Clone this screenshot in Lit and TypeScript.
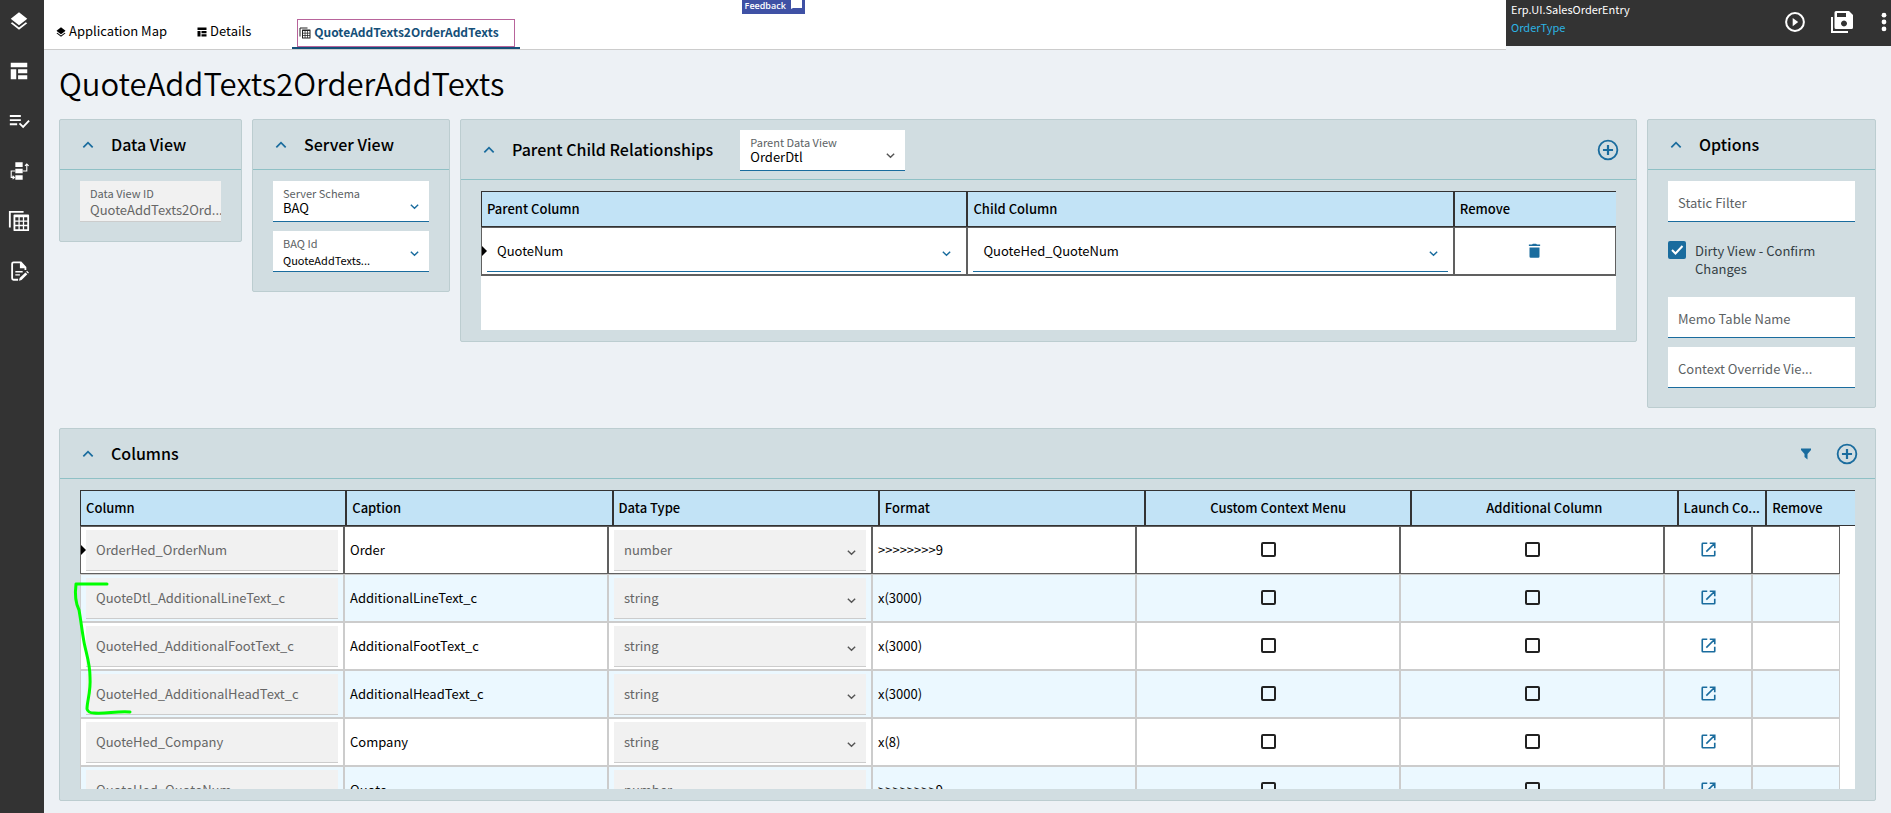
import { LitElement, html, css, svg, nothing } from "lit";
import { customElement, property } from "lit/decorators.js";
import { classMap } from "lit/directives/class-map.js";

const icons = {
  layers: svg`<path d="M12 16.500l7.400-5.700L21 9.500 12 2.500 3 9.500l1.600 1.300z M12 19L4.600 13.300 3 14.500l9 7 9-7-1.600-1.200z"/>`,
  layout: svg`<path d="M3 3h18v5H3z M3 10h6v11H3z M11 10h10v4.500H11z M11 16.500h10V21H11z"/>`,
  listCheck: svg`<path d="M2 5.500h12v2H2z M2 10h12v2H2z M2 14.500h8v2H2z"/><path d="M12.500 14.500l4 4 6.500-7" fill="none" stroke="currentColor" stroke-width="2"/>`,
  flow: svg`<path d="M8 2.500h8v5H8z M8 9.500h8v5H8z M8 16.500h8v5H8z"/><path d="M16 12h4.500V5M18.500 6.500l2-2 2 2M8 12H3.500v7h2.500M5 17.200l2 1.800-2 1.800" fill="none" stroke="currentColor" stroke-width="1.200"/>`,
  grid: svg`<path d="M2 19V2h15" fill="none" stroke="currentColor" stroke-width="2"/><path fill-rule="evenodd" d="M7 5h15a1 1 0 0 1 1 1v16a1 1 0 0 1-1 1H7a1 1 0 0 1-1-1V6a1 1 0 0 1 1-1z M8 8v3.400h3.400V8z M12.800 8v3.400h3.400V8z M17.600 8v3.400H21V8z M8 12.800v3.400h3.400v-3.400z M12.800 12.800v3.400h3.400v-3.400z M17.600 12.800v3.400H21v-3.400z M8 17.600V21h3.400v-3.400z M12.800 17.600V21h3.400v-3.400z M17.600 17.600V21H21v-3.400z"/>`,
  edit: svg`<path d="M11 21.500H6a1.500 1.500 0 0 1-1.500-1.500V4A1.500 1.500 0 0 1 6 2.500h8l5 5.500v3" fill="none" stroke="currentColor" stroke-width="2"/><path d="M13 2v7h6.500z M8 12h8v1.500H8z M8 15.500h5V17H8z M12 22.500l.7-2.800 6.300-6.200 2.100 2.100-6.300 6.200z M19.800 12.700l1-1 2.100 2.100-1 1z"/>`,
  play: svg`<circle cx="12" cy="12" r="9.700" fill="none" stroke="currentColor" stroke-width="2.200"/><path d="M9.500 7.500l6 4.500-6 4.500z"/>`,
  save: svg`<path d="M2 7v15h16" fill="none" stroke="currentColor" stroke-width="2"/><path fill-rule="evenodd" d="M6 1h13l4 4v12.500a1.500 1.500 0 0 1-1.500 1.500H6a1.500 1.500 0 0 1-1.500-1.500v-15A1.500 1.500 0 0 1 6 1z M7 3v4h9V3z M14 10.500a3 3 0 1 0 .01 0z"/>`,
  dots: svg`<circle cx="12" cy="4.500" r="2.600"/><circle cx="12" cy="12" r="2.600"/><circle cx="12" cy="19.500" r="2.600"/>`,
  up: svg`<path d="M4 16l8-8 8 8" fill="none" stroke="currentColor" stroke-width="3"/>`,
  down: svg`<path d="M4 8l8 8 8-8" fill="none" stroke="currentColor" stroke-width="3"/>`,
  add: svg`<circle cx="12" cy="12" r="10.200" fill="none" stroke="currentColor" stroke-width="2"/><path d="M12 6.500v11M6.500 12h11" fill="none" stroke="currentColor" stroke-width="2.400"/>`,
  filter: svg`<path d="M2 1h20v3l-7 8v11l-6-5v-6L2 4z"/>`,
  trash: svg`<path d="M4 7h16v14.500a2 2 0 0 1-2 2H6a2 2 0 0 1-2-2z M3 2.500h5L9.500 1h5L16 2.500h5v2.300H3z"/>`,
  launch: svg`<path d="M10 2H3a1 1 0 0 0-1 1v18a1 1 0 0 0 1 1h18a1 1 0 0 0 1-1v-7M14 2h8v8M22 2L8.500 15.500" fill="none" stroke="currentColor" stroke-width="2.600"/>`,
};

type IconName = keyof typeof icons;

const icon = (name: IconName, size = "m") =>
  html`<svg class="icon ${size}" viewBox="0 0 24 24" aria-hidden="true">${icons[name]}</svg>`;

const shared = css`
  * {
    box-sizing: border-box;
  }
  .icon {
    display: block;
    flex: none;
    fill: currentColor;
    width: 22px;
    height: 22px;
  }
  .icon.xs {
    width: 12px;
    height: 12px;
  }
  .icon.s {
    width: 15px;
    height: 15px;
  }
  .icon.l {
    width: 24px;
    height: 24px;
  }
  button {
    display: block;
    margin: 0;
    padding: 0;
    border: 0;
    background: none;
    font: inherit;
    color: inherit;
    cursor: pointer;
  }
  input,
  select {
    margin: 0;
    font: inherit;
    color: inherit;
    border-radius: 0;
  }
`;

@customElement("form-field")
class FormField extends LitElement {
  static styles = [
    shared,
    css`
      :host {
        display: block;
      }
      .field {
        display: grid;
        grid-template-columns: minmax(0, 1fr) 20px;
        grid-template-rows: 20px 20px;
        height: 41px;
        background: #fff;
        border-bottom: 1px solid #1a6c9e;
        color: #000;
      }
      .label {
        grid-area: 1 / 1 / 2 / 3;
        align-self: end;
        padding: 0 0 1px 10px;
        font-size: 11px;
        line-height: 14px;
        color: #5c6264;
      }
      .control {
        grid-area: 1 / 1 / 3 / 3;
        width: 100%;
        min-width: 0;
        height: 40px;
        padding: 13px 0 0 10px;
        border: 0;
        background: none;
        appearance: none;
        outline: none;
        white-space: nowrap;
        overflow: hidden;
        opacity: 1;
      }
      .control::placeholder {
        color: #5c6264;
        opacity: 1;
      }
      .pick {
        padding-right: 24px;
      }
      .small .pick {
        padding-top: 18px;
        font-size: 11px;
      }
      .text .control {
        padding-top: 2px;
      }
      .disabled .control {
        padding-top: 17px;
      }
      .disabled {
        background: #f1f1f1;
        border-color: #ccc;
        color: #666;
      }
      .plain .control {
        padding-top: 0;
      }
      .plain input.control {
        padding-bottom: 2px;
      }
      .arrow {
        grid-area: 1 / 2 / 3 / 3;
        align-self: center;
        margin-top: 11px;
        color: #1a6c9e;
        pointer-events: none;
      }
      .small .arrow,
      .plain .arrow {
        margin-top: 4px;
      }
      .dark .arrow,
      .disabled .arrow {
        color: #555;
      }
      .arrow .icon {
        width: 11px;
        height: 11px;
      }
    `,
  ];
  @property() label = "";
  @property() value = "";
  @property() kind: "select" | "text" = "text";
  /* floating: caption above the value; empty: caption inside; plain: no caption (grid cell) */
  @property() look = "floating";
  @property({ type: Boolean }) small = false;
  @property({ type: Boolean }) dark = false;
  @property({ type: Boolean }) disabled = false;

  render() {
    const cls = {
      field: true,
      small: this.small,
      dark: this.dark,
      disabled: this.disabled,
      plain: this.look === "plain",
      text: this.look === "empty",
    };
    return html`<div class=${classMap(cls)}>
      ${this.look === "floating" ? html`<label class="label" for="control">${this.label}</label>` : nothing}
      ${this.kind === "select"
        ? html`<select id="control" class="control pick" aria-label=${this.label} ?disabled=${this.disabled}>
              <option>${this.value}</option>
            </select>
            <span class="arrow">${icon("down", "xs")}</span>`
        : html`<input
            id="control"
            class="control"
            aria-label=${this.label}
            placeholder=${this.look === "empty" ? this.label : ""}
            .value=${this.value}
            ?disabled=${this.disabled}
          />`}
    </div>`;
  }
}

@customElement("side-panel")
class SidePanel extends LitElement {
  static styles = [
    shared,
    css`
      :host {
        display: flex;
        flex-direction: column;
        background: #d1dde1;
        border: 1px solid #bccdd0;
        border-radius: 2px;
        min-width: 0;
      }
      .head {
        flex: none;
        display: flex;
        align-items: center;
        min-height: 50px;
        padding: 0 17px 0 21px;
        border-bottom: 1px solid #8fc0c5;
      }
      .toggle {
        color: #1a6c9e;
        padding: 0;
        margin-right: 16px;
      }
      .toggle .icon {
        width: 14px;
        height: 14px;
      }
      .heading {
        margin: 0;
        padding-bottom: 2px;
        font-size: 16px;
        line-height: 24px;
        font-weight: 500;
        white-space: nowrap;
      }
      .extra {
        flex: 1;
        display: flex;
        align-items: center;
        min-width: 0;
      }
      .body {
        flex: 1;
        min-height: 0;
        display: flex;
        flex-direction: column;
        gap: 9px;
        padding: 11px 20px 19px;
      }
      :host([flush]) .body {
        padding-bottom: 11px;
      }
    `,
  ];
  @property() heading = "";

  render() {
    return html`<header class="head">
        <button class="toggle" aria-label="Collapse ${this.heading}">${icon("up")}</button>
        <h2 class="heading">${this.heading}</h2>
        <div class="extra"><slot name="extra"></slot></div>
      </header>
      <div class="body"><slot></slot></div>`;
  }
}

const columnRows = [
  ["OrderHed_OrderNum", "Order", "number", ">>>>>>>>9"],
  ["QuoteDtl_AdditionalLineText_c", "AdditionalLineText_c", "string", "x(3000)"],
  ["QuoteHed_AdditionalFootText_c", "AdditionalFootText_c", "string", "x(3000)"],
  ["QuoteHed_AdditionalHeadText_c", "AdditionalHeadText_c", "string", "x(3000)"],
  ["QuoteHed_Company", "Company", "string", "x(8)"],
  ["QuoteHed_QuoteNum", "Quote", "number", ">>>>>>>>9"],
];

const navItems: [IconName, string][] = [
  ["layers", "Application Map"],
  ["layout", "Layout"],
  ["listCheck", "Rules"],
  ["flow", "Events"],
  ["grid", "Data Views"],
  ["edit", "Properties"],
];

@customElement("app-root")
class AppRoot extends LitElement {
  static styles = [
    shared,
    css`
      :host {
        display: flex;
        height: 100vh;
        min-height: 640px;
        background: #edf1f5;
        color: #000;
        font-family: "Noto Sans CJK SC", "Noto Sans", sans-serif;
        font-size: 13px;
        line-height: 18px;
        overflow: hidden;
      }
      .rail {
        flex: none;
        width: 44px;
        padding: 10px 8px;
        display: flex;
        flex-direction: column;
        gap: 28px;
        background: #333;
        color: #fff;
      }
      .page {
        flex: 1;
        min-width: 0;
        display: flex;
        flex-direction: column;
      }
      .top {
        display: flex;
        align-items: flex-start;
      }
      .tabs {
        flex: 1;
        display: flex;
        align-items: flex-end;
        height: 50px;
        padding-left: 11px;
        background: #fff;
        border-bottom: 1px solid #ccc;
      }
      .tab {
        display: flex;
        align-items: center;
        gap: 2px;
        height: 28px;
        margin: 0 29px 4px 0;
        color: #000;
        text-decoration: none;
        white-space: nowrap;
      }
      .tab .icon {
        margin-top: 2px;
      }
      .current {
        margin: 0 0 0 12px;
        height: auto;
        padding: 0 5px;
        border-bottom: 2px solid #154f78;
        font-size: 12px;
        font-weight: 700;
        color: #154f78;
      }
      .ring {
        display: flex;
        align-items: center;
        gap: 3px;
        height: 28px;
        padding: 0 15px 2px 1px;
        border: 1px solid #b8649b;
      }
      .current .icon {
        color: #222;
      }
      .feedback {
        align-self: flex-start;
        display: flex;
        align-items: flex-start;
        gap: 5px;
        height: 14px;
        margin-left: 222px;
        padding: 0 3px;
        background: #3f51a5;
        color: #fff;
        font-size: 9px;
        font-weight: 600;
        font-family: "Open Sans", sans-serif;
        line-height: 12px;
      }
      .bubble {
        width: 11px;
        height: 9px;
        fill: #fff;
      }
      .context {
        flex: none;
        display: flex;
        width: 385px;
        height: 46px;
        padding-left: 5px;
        background: #333;
        color: #fff;
        font-size: 11px;
        overflow: hidden;
      }
      .names {
        flex: 1;
      }
      .link {
        display: block;
        color: #2cb4e4;
        text-decoration: none;
      }
      .actions {
        display: flex;
        align-items: center;
        gap: 24px;
        padding: 0 1px 2px 0;
      }
      .more {
        display: flex;
        justify-content: center;
        width: 12px;
      }
      .title {
        margin: 13px 15px 16px;
        font-size: 31px;
        line-height: 40px;
        font-weight: 350;
      }
      .panels {
        flex: none;
        display: grid;
        grid-template-columns: 183px 198px minmax(0, 1fr) 229px;
        gap: 10px;
        align-items: start;
        margin: 0 15px 20px;
      }
      .view-pick {
        width: 165px;
        margin: 10px 0 8px 27px;
      }
      .tools {
        display: flex;
        align-items: center;
        gap: 24px;
        margin-left: auto;
        color: #1a6c9e;
      }
      .columns {
        position: relative;
        flex: 1;
        min-height: 200px;
        margin: 0 15px 12px;
      }
      .grid {
        display: block;
        flex: 1;
        min-height: 0;
        overflow: hidden;
        background: #fff;
      }
      .short {
        min-height: 139px;
      }
      thead,
      tbody {
        display: block;
      }
      tr {
        display: grid;
        grid-template-columns: repeat(6, minmax(0, 3fr)) repeat(2, minmax(0, 1fr));
      }
      .short tr {
        grid-template-columns: minmax(0, 3fr) minmax(0, 3fr) minmax(0, 1fr);
      }
      th {
        height: 36px;
        padding: 8px 5px;
        background: #c2e3f6;
        border: 1px solid #333;
        font-weight: 500;
        text-align: left;
        white-space: nowrap;
      }
      th:last-child {
        border-right: 0;
      }
      .center {
        text-align: center;
      }
      .scroll {
        margin-right: 15px;
      }
      td {
        display: flex;
        flex-direction: column;
        justify-content: center;
        height: 48px;
        padding: 2px 5px 3px;
        border: 1px solid #ccc;
      }
      .edit {
        padding: 3px 5px 2px;
      }
      .mid {
        align-items: center;
        color: #1a6c9e;
      }
      .scroll tr:nth-child(even) {
        background: #ebf8ff;
      }
      .active td {
        border-color: #606060;
      }
      .short td {
        height: 49px;
        border-bottom-width: 2px;
      }
      .active td:first-child {
        position: relative;
      }
      .active td:first-child::before {
        content: "";
        position: absolute;
        left: 0;
        top: 18px;
        border: 5px solid transparent;
        border-left-color: #000;
        border-right: 0;
      }
      .box {
        display: block;
        width: 15px;
        height: 15px;
        appearance: none;
        background: transparent;
        border: 2px solid #222;
        border-radius: 2px;
      }
      .dirty {
        display: grid;
        grid-template-columns: 18px 1fr;
        column-gap: 9px;
        margin: 10px 0;
        color: #333d44;
      }
      .tick {
        grid-area: 1 / 1;
        width: 18px;
        height: 18px;
        appearance: none;
        background: #1a6c9e;
        border-radius: 2px;
      }
      .mark {
        grid-area: 1 / 1;
        width: 18px;
        height: 18px;
        fill: none;
        stroke: #fff;
        stroke-width: 2;
        pointer-events: none;
      }
      .caption {
        padding-top: 1px;
      }
      .scribble {
        position: absolute;
        left: 8px;
        top: 148px;
        width: 70px;
        height: 140px;
        fill: none;
        stroke: #0f0;
        stroke-width: 3;
        stroke-linecap: round;
        stroke-linejoin: round;
        pointer-events: none;
      }
    `,
  ];

  render() {
    return html`
      <nav class="rail" aria-label="Tools">
        ${navItems.map(([name, label]) => html`<button aria-label=${label}>${icon(name)}</button>`)}
      </nav>
      <main class="page">
        <div class="top">
          <nav class="tabs" aria-label="Pages">
            <a class="tab" href="#map">${icon("layers", "xs")}Application Map</a>
            <a class="tab" href="#details">${icon("layout", "xs")}Details</a>
            <a class="tab current" href="#view" aria-current="page"
              ><span class="ring">${icon("grid", "xs")}QuoteAddTexts2OrderAddTexts</span></a
            >
            <button class="feedback">
              Feedback
              <svg class="bubble" viewBox="0 0 11 9" aria-hidden="true"><path d="M0 0h11v8H2L0 9z" /></svg>
            </button>
          </nav>
          <div class="context">
            <div class="names">Erp.UI.SalesOrderEntry<a class="link" href="#type">OrderType</a></div>
            <div class="actions">
              <button aria-label="Preview">${icon("play")}</button>
              <button aria-label="Save">${icon("save", "l")}</button>
              <button class="more" aria-label="More">${icon("dots")}</button>
            </div>
          </div>
        </div>
        <h1 class="title">QuoteAddTexts2OrderAddTexts</h1>
        <div class="panels">
          <side-panel heading="Data View">
            <form-field label="Data View ID" value="QuoteAddTexts2Ord..." disabled></form-field>
          </side-panel>
          <side-panel heading="Server View">
            <form-field kind="select" label="Server Schema" value="BAQ"></form-field>
            <form-field kind="select" label="BAQ Id" value="QuoteAddTexts..." small></form-field>
          </side-panel>
          <side-panel heading="Parent Child Relationships" flush>
            <form-field
              slot="extra"
              class="view-pick"
              kind="select"
              label="Parent Data View"
              value="OrderDtl"
              dark
            ></form-field>
            <div slot="extra" class="tools"><button aria-label="Add relationship">${icon("add")}</button></div>
            <table class="grid short">
              <thead>
                <tr>
                  <th>Parent Column</th>
                  <th>Child Column</th>
                  <th>Remove</th>
                </tr>
              </thead>
              <tbody>
                <tr class="active">
                  <td class="edit">
                    <form-field kind="select" look="plain" label="Parent Column" value="QuoteNum"></form-field>
                  </td>
                  <td class="edit">
                    <form-field kind="select" look="plain" label="Child Column" value="QuoteHed_QuoteNum"></form-field>
                  </td>
                  <td class="mid"><button aria-label="Remove">${icon("trash", "s")}</button></td>
                </tr>
              </tbody>
            </table>
          </side-panel>
          <side-panel heading="Options">
            <form-field look="empty" label="Static Filter"></form-field>
            <label class="dirty">
              <input class="tick" type="checkbox" checked />
              <svg class="mark" viewBox="0 0 18 18" aria-hidden="true"><path d="M4 9l3.500 3.500L14.500 5" /></svg>
              <span class="caption">Dirty View - Confirm Changes</span>
            </label>
            <form-field look="empty" label="Memo Table Name"></form-field>
            <form-field look="empty" label="Context Override Vie..."></form-field>
          </side-panel>
        </div>
        <side-panel class="columns" heading="Columns" flush>
          <div slot="extra" class="tools">
            <button aria-label="Filter">${icon("filter", "xs")}</button>
            <button aria-label="Add column">${icon("add")}</button>
          </div>
          <table class="grid">
            <thead>
              <tr>
                <th>Column</th>
                <th>Caption</th>
                <th>Data Type</th>
                <th>Format</th>
                <th class="center">Custom Context Menu</th>
                <th class="center">Additional Column</th>
                <th>Launch Co...</th>
                <th>Remove</th>
              </tr>
            </thead>
            <tbody class="scroll">
              ${columnRows.map(
                ([name, caption, type, format], i) => html`<tr class=${classMap({ active: i === 0 })}>
                  <td class="edit"><form-field look="plain" label="Column" .value=${name} disabled></form-field></td>
                  <td>${caption}</td>
                  <td class="edit">
                    <form-field kind="select" look="plain" label="Data Type" .value=${type} disabled></form-field>
                  </td>
                  <td>${format}</td>
                  <td class="mid"><input class="box" type="checkbox" aria-label="Custom Context Menu" /></td>
                  <td class="mid"><input class="box" type="checkbox" aria-label="Additional Column" /></td>
                  <td class="mid"><button aria-label="Launch">${icon("launch", "s")}</button></td>
                  <td></td>
                </tr>`
              )}
            </tbody>
          </table>
          <svg class="scribble" viewBox="0 0 70 140" aria-hidden="true">
            <path
              d="M39 7H8C7 15 7 25 11 33C13 44 14 54 16 65C18 76 22 86 22 100C23 115 19 124 19 132Q20 136 26 136C38 137 48 134 62 135"
            />
          </svg>
        </side-panel>
      </main>
    `;
  }
}
